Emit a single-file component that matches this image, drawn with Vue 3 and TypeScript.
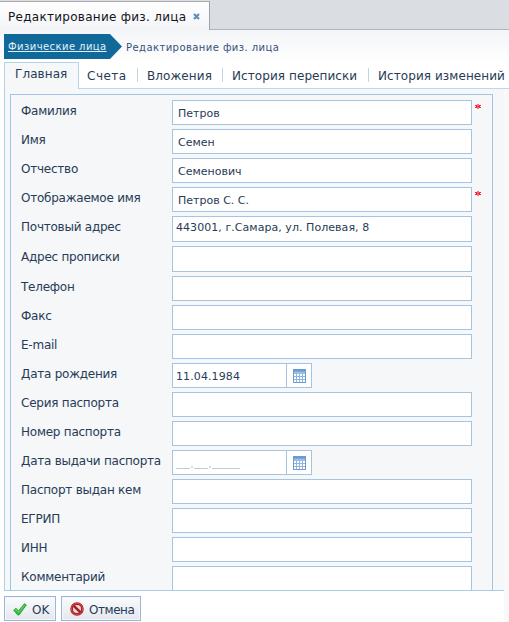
<script setup lang="ts">
interface Field {
  label: string
  value?: string
  kind?: 'text' | 'area' | 'date'
  required?: boolean
}

const tabs: string[] = ['Главная', 'Счета', 'Вложения', 'История переписки', 'История изменений']

const fields: Field[] = [
  { label: 'Фамилия', value: 'Петров', required: true },
  { label: 'Имя', value: 'Семен' },
  { label: 'Отчество', value: 'Семенович' },
  { label: 'Отображаемое имя', value: 'Петров С. С.', required: true },
  { label: 'Почтовый адрес', value: '443001, г.Самара, ул. Полевая, 8', kind: 'area' },
  { label: 'Адрес прописки', kind: 'area' },
  { label: 'Телефон' },
  { label: 'Факс' },
  { label: 'E-mail' },
  { label: 'Дата рождения', value: '11.04.1984', kind: 'date' },
  { label: 'Серия паспорта' },
  { label: 'Номер паспорта' },
  { label: 'Дата выдачи паспорта', kind: 'date' },
  { label: 'Паспорт выдан кем' },
  { label: 'ЕГРИП' },
  { label: 'ИНН' },
  { label: 'Комментарий', kind: 'area' },
]
</script>

<template>
  <div class="window">
    <header class="titlebar">
      <div class="doc-tab">
        <span class="doc-title">Редактирование физ. лица</span>
        <svg class="close" width="7" height="7" viewBox="0 0 7 7"><path d="M1 1L6 6M6 1L1 6" stroke="#5b8fbf" stroke-width="2.2" /></svg>
      </div>
      <div class="title-rest"></div>
    </header>
    <nav class="crumbs">
      <a class="crumb-link"><span>Физические лица</span></a>
      <span class="crumb-current">Редактирование физ. лица</span>
    </nav>
    <div class="tabs">
      <div v-for="(t, i) in tabs" :key="t" class="tab" :class="{ active: i === 0 }"><span>{{ t }}</span></div>
    </div>
    <div class="body">
      <main class="panel">
        <div class="form">
          <div v-for="f in fields" :key="f.label" class="row" :class="{ area: f.kind === 'area' }">
            <label class="label">{{ f.label }}</label>
            <div v-if="f.kind === 'date'" class="date">
              <div class="date-value">
                <span v-if="f.value">{{ f.value }}</span>
                <span v-else class="mask"><i class="w2"></i><b></b><i class="w2"></i><b></b><i class="w4"></i></span>
              </div>
              <div class="picker">
                <svg width="13" height="14" viewBox="0 0 13 14">
                  <rect width="13" height="14" fill="#6b9bd0" />
                  <rect x="1" y="2" width="11" height="1" fill="#80aad6" />
                  <rect x="1" y="3" width="11" height="2" fill="#9dbfe3" />
                  <rect x="1" y="5" width="11" height="8" fill="#8fb4df" />
                  <path d="M1 5h2v2H1zM4 5h2v2H4zM7 5h2v2H7zM10 5h2v2h-2zM1 8h2v2H1zM4 8h2v2H4zM7 8h2v2H7zM10 8h2v2h-2zM1 11h2v2H1zM4 11h2v2H4zM7 11h2v2H7zM10 11h2v2h-2z" fill="#fff" />
                </svg>
              </div>
            </div>
            <div v-else class="input">{{ f.value }}</div>
            <svg v-if="f.required" class="star" width="6" height="5" viewBox="0 0 6 5"><path d="M0 1.5h2M4 1.5h2M0 3.5h2M4 3.5h2" stroke="#f5203c" /><path d="M1 2.5h4" stroke="#f02038" /><path d="M3 0v5" stroke="#f83a50" stroke-width="1.4" /></svg>
          </div>
        </div>
      </main>
    </div>
    <footer class="actions">
      <div class="buttons">
        <button class="btn ok">
          <svg width="14" height="13" viewBox="0 0 14 13"><path d="M.7 7.2L3 5.2 5.4 8 11.4.7l2 1.2L6 12H4.700z" fill="#35bd3c" stroke="#249a30" stroke-width=".8" stroke-linejoin="round" /><path d="M2 7.200l1-.8 2.500 2.900L11.600 2" fill="none" stroke="#79dc73" stroke-width=".8" /></svg>
          <span>OK</span>
        </button>
        <button class="btn cancel">
          <svg width="14" height="14" viewBox="0 0 14 14"><circle cx="7" cy="7" r="5.400" fill="#f1d9d9" stroke="#a51d25" stroke-width="2.700" /><path d="M3.300 3.300l7.400 7.400" stroke="#a51d25" stroke-width="2.500" /><circle cx="7" cy="7" r="5.600" fill="none" stroke="#d4494d" stroke-width="1" /></svg>
          <span>Отмена</span>
        </button>
      </div>
    </footer>
  </div>
</template>

<style>
body { overflow: hidden; background: #fff; }
</style>

<style scoped>
* { box-sizing: border-box; }
.window { width: 509px; height: 622px; display: flex; flex-direction: column; overflow: hidden; font-family: "DejaVu Sans", Verdana, sans-serif; font-size: 12px; color: #283b56; white-space: nowrap; }
.titlebar { display: flex; height: 30px; flex: none; background: #dadde1; }
.doc-tab { width: 210px; margin-top: 1px; border-top: 1px solid #a9abad; border-right: 1px solid #a0a2a4; background: linear-gradient(#fff, #f3f4f6); display: flex; align-items: center; gap: 7px; padding: 1px 0 0 8px; color: #14141c; }
.doc-title { width: 178px; letter-spacing: 0.28px; }
.title-rest { flex: 1; border-bottom: 1px solid #b3b5b7; }
.crumbs { height: 32px; flex: none; display: flex; padding: 4px 0 0 4px; background: linear-gradient(#f3f5f8, #fff); font-size: 10px; letter-spacing: 0.43px; }
.crumb-link { width: 118px; height: 25px; padding-left: 4px; line-height: 25px; background: #11699a; color: #e2f2fb; clip-path: polygon(0 0, 106px 0, 118px 50%, 106px 100%, 0 100%); text-decoration: underline; }
.crumb-current { margin-left: 4px; line-height: 28px; color: #36517d; }
.tabs { height: 27px; flex: none; display: flex; margin-left: 4px; letter-spacing: 0.08px; }
.tab { position: relative; height: 27px; border-bottom: 1px solid #bcd8ea; padding: 3px 0 0 10px; line-height: 23px; width: 85px; }
.tab.active { width: 75px; border: 1px solid #b4d2e8; border-bottom: 0; background: #f5f7f9; padding-top: 0; }
.tab:nth-child(2) { width: 58px; padding-left: 8px; letter-spacing: 0.5px; }
.tab:nth-child(4) { width: 146px; }
.tab:nth-child(5) { flex: 1; }
.tab + .tab + .tab::before { content: ""; position: absolute; left: 0; top: 6px; height: 14px; width: 1px; background: #c2d5e4; }
.body { height: 502px; flex: none; display: flex; padding: 0 5px 0 4px; background: linear-gradient(90deg, #fff 504px, #f9f9f9 504px); }
.panel { flex: 1; height: 502px; overflow: hidden; background: #f5f7f9; border-left: 1px solid #b0d0e6; border-bottom: 1px solid #a9cce5; padding: 5px 11px 0 5px; }
.form { height: 520px; border: 1px solid #a0c4e2; padding: 5px 0 0 10px; display: flex; flex-direction: column; gap: 4px; }
.row { display: flex; height: 25px; flex: none; }
.row.area { height: 26px; }
.label { width: 151px; flex: none; line-height: 23px; letter-spacing: -0.24px; }
.input { width: 300px; border: 1px solid #a4c4e0; background: #fff; padding-left: 5px; line-height: 25px; font-size: 11px; }
.area .input { padding-left: 3px; line-height: 21px; letter-spacing: 0.05px; }
.star { margin: 4px 0 0 3px; }
.date { display: flex; width: 140px; border: 1px solid #a4c4e0; background: #fff; }
.date-value { width: 113px; padding-left: 3px; line-height: 25px; font-size: 11px; letter-spacing: 0.1px; }
.picker { flex: 1; border-left: 1px solid #a4c4e0; display: flex; padding: 5px 0 0 6px; }
.mask { display: flex; align-items: flex-end; height: 18px; gap: 1px; }
.mask i { height: 1px; background: #c9c9c9; }
.mask b { height: 2px; width: 2px; margin-bottom: 1px; background: #d5dce2; }
.w2 { width: 14px; }
.w4 { width: 28px; }
.actions { flex: 1; padding: 5px 0 0 4px; background: linear-gradient(90deg, #fff 504px, #f9f9f9 504px); }
.buttons { display: flex; gap: 5px; }
.btn { height: 25px; display: flex; align-items: center; border: 1px solid #9db6d8; border-radius: 0; padding: 2px 0 0 8px; gap: 5px; font: inherit; color: inherit; background: linear-gradient(#fafbfc, #e3e8ee); box-shadow: inset 0 0 0 1px #f4f7fa; }
.btn svg { flex: none; margin-top: -1px; }
.ok { width: 52px; }
.cancel { width: 80px; letter-spacing: -0.45px; }
</style>
